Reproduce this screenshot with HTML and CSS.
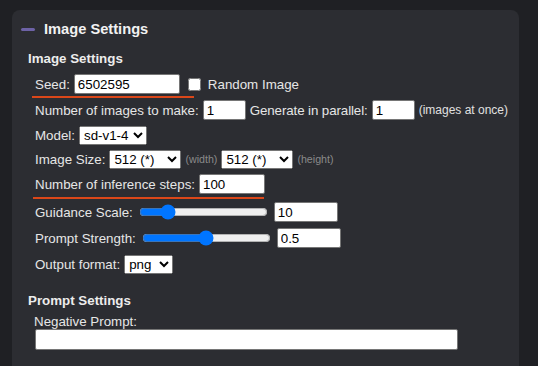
FILE: index.html
```html
<!DOCTYPE html>
<html lang="en">
<head>
<meta charset="utf-8">
<title>Image Settings</title>
<link rel="stylesheet" href="styles.css">
</head>
<body>
<div class="panel">
  <div class="panel-header">
    <span class="collapse-icon"></span>
    <h2 class="panel-title">Image Settings</h2>
  </div>

  <div class="section">
    <h3 class="section-title">Image Settings</h3>
    <div class="rows">
      <div class="row r-seed">
        <span class="lbl">Seed:</span>
        <input class="txt w-seed" type="text" value="6502595">
        <input class="chk" type="checkbox">
        <span class="lbl">Random Image</span>
      </div>
      <div class="mark mark-seed"></div>
      <div class="row r-count">
        <span class="lbl">Number of images to make:</span>
        <input class="txt w-num" type="text" value="1">
        <span class="lbl lbl-tight">Generate in parallel:</span>
        <input class="txt w-num" type="text" value="1">
        <span class="note">(images at once)</span>
      </div>
      <div class="row r-model">
        <span class="lbl">Model:</span>
        <select class="sel w-model"><option>sd-v1-4</option></select>
      </div>
      <div class="row r-size">
        <span class="lbl">Image Size:</span>
        <select class="sel w-size"><option>512 (*)</option></select>
        <span class="hint">(width)</span>
        <select class="sel w-size"><option>512 (*)</option></select>
        <span class="hint">(height)</span>
      </div>
      <div class="row r-steps">
        <span class="lbl">Number of inference steps:</span>
        <input class="txt w-steps" type="text" value="100">
      </div>
      <div class="mark mark-steps"></div>
      <div class="row r-guid">
        <span class="lbl">Guidance Scale:</span>
        <input class="rng" type="range" min="1" max="50" step="1" value="10">
        <input class="txt w-val" type="text" value="10">
      </div>
      <div class="row r-str">
        <span class="lbl">Prompt Strength:</span>
        <input class="rng" type="range" min="0" max="1" step="0.01" value="0.5">
        <input class="txt w-val" type="text" value="0.5">
      </div>
      <div class="row r-fmt">
        <span class="lbl">Output format:</span>
        <select class="sel w-fmt"><option>png</option></select>
      </div>
    </div>
  </div>

  <div class="section section-prompt">
    <h3 class="section-title">Prompt Settings</h3>
    <div class="field">
      <span class="field-label">Negative Prompt:</span>
      <textarea class="area"></textarea>
    </div>
  </div>
</div>
</body>
</html>
```

FILE: styles.css
```css
html, body {
  margin: 0;
  padding: 0;
  height: 100%;
  overflow: hidden;
  background: #1f2024;
}

body {
  font-family: "Liberation Sans", Arial, sans-serif;
  font-size: 13.33px;
  color: #e6e6e6;
}

.panel {
  box-sizing: border-box;
  height: calc(100% - 10px);
  margin: 10px 19px 0 12px;
  background: #2c2d32;
  border-radius: 8px 8px 0 0;
  padding: 9px 0 0 0;
  overflow: hidden;
}

.panel-header {
  display: flex;
  align-items: center;
  gap: 9px;
  padding-left: 9px;
  height: 20px;
}

.collapse-icon {
  width: 14px;
  height: 3px;
  border-radius: 2px;
  background: #6d62a6;
}

.panel-title {
  margin: 0;
  font-size: 14.67px;
  line-height: 20px;
  font-weight: bold;
  color: #f2f2f2;
}

.section {
  padding-left: 16px;
}

.section-title {
  margin: 12px 0 0 0;
  font-size: 13.33px;
  line-height: 16px;
  font-weight: bold;
  color: #ececec;
}

.rows {
  padding-left: 7px;
  margin-top: 6px;
}

.row {
  display: flex;
  align-items: center;
  gap: 4px;
  height: 22px;
  white-space: nowrap;
}

.r-count { margin-top: 1px; }
.r-model { margin-top: 3px; }
.r-size { margin-top: 2px; }
.r-steps { margin-top: 3px; }
.r-guid { margin-top: 2px; }
.r-str { margin-top: 4px; }
.r-fmt { margin-top: 4px; }

.lbl-tight {
  letter-spacing: -0.1px;
}

.mark {
  height: 2px;
  background: #db4719;
}

.mark-seed {
  margin: 1px 0 0 -3px;
  width: 162px;
}

.mark-steps {
  margin: 2px 0 0 -2px;
  width: 231px;
}

.txt {
  box-sizing: border-box;
  height: 20px;
  margin: 0;
  padding: 1px 3px;
  border: 1px solid #767676;
  border-radius: 2px;
  background: #fff;
  color: #000;
  font-family: "Liberation Sans", Arial, sans-serif;
  font-size: 13.33px;
}

.w-seed { width: 106px; }
.w-num { width: 43px; }
.w-steps { width: 66px; }
.w-val { width: 64px; }

.chk {
  margin: 0 3px 0 4px;
  width: 13px;
  height: 13px;
}

.sel {
  box-sizing: border-box;
  height: 19px;
  margin: 0;
  font-family: "Liberation Sans", Arial, sans-serif;
  font-size: 13.33px;
  color: #000;
}

.w-model { width: 68px; }
.w-size { width: 72px; }
.w-fmt { width: 49px; }

.hint {
  font-size: 10.67px;
  color: #8a8a8a;
}

.note {
  font-size: 12px;
  color: #e0e0e0;
}

.rng {
  width: 129px;
  margin: 0 2px;
}

.section-prompt .section-title {
  margin-top: 18px;
}

.field {
  padding-left: 6px;
  margin-top: 6px;
}

.field-label {
  display: block;
  line-height: 14px;
  color: #e6e6e6;
}

.area {
  display: block;
  box-sizing: border-box;
  width: 423px;
  height: 21px;
  margin: 0 0 0 1px;
  padding: 2px;
  border: 1px solid #767676;
  border-radius: 2px;
  background: #fff;
  resize: none;
  font-family: "Liberation Sans", Arial, sans-serif;
  font-size: 13.33px;
}
```
